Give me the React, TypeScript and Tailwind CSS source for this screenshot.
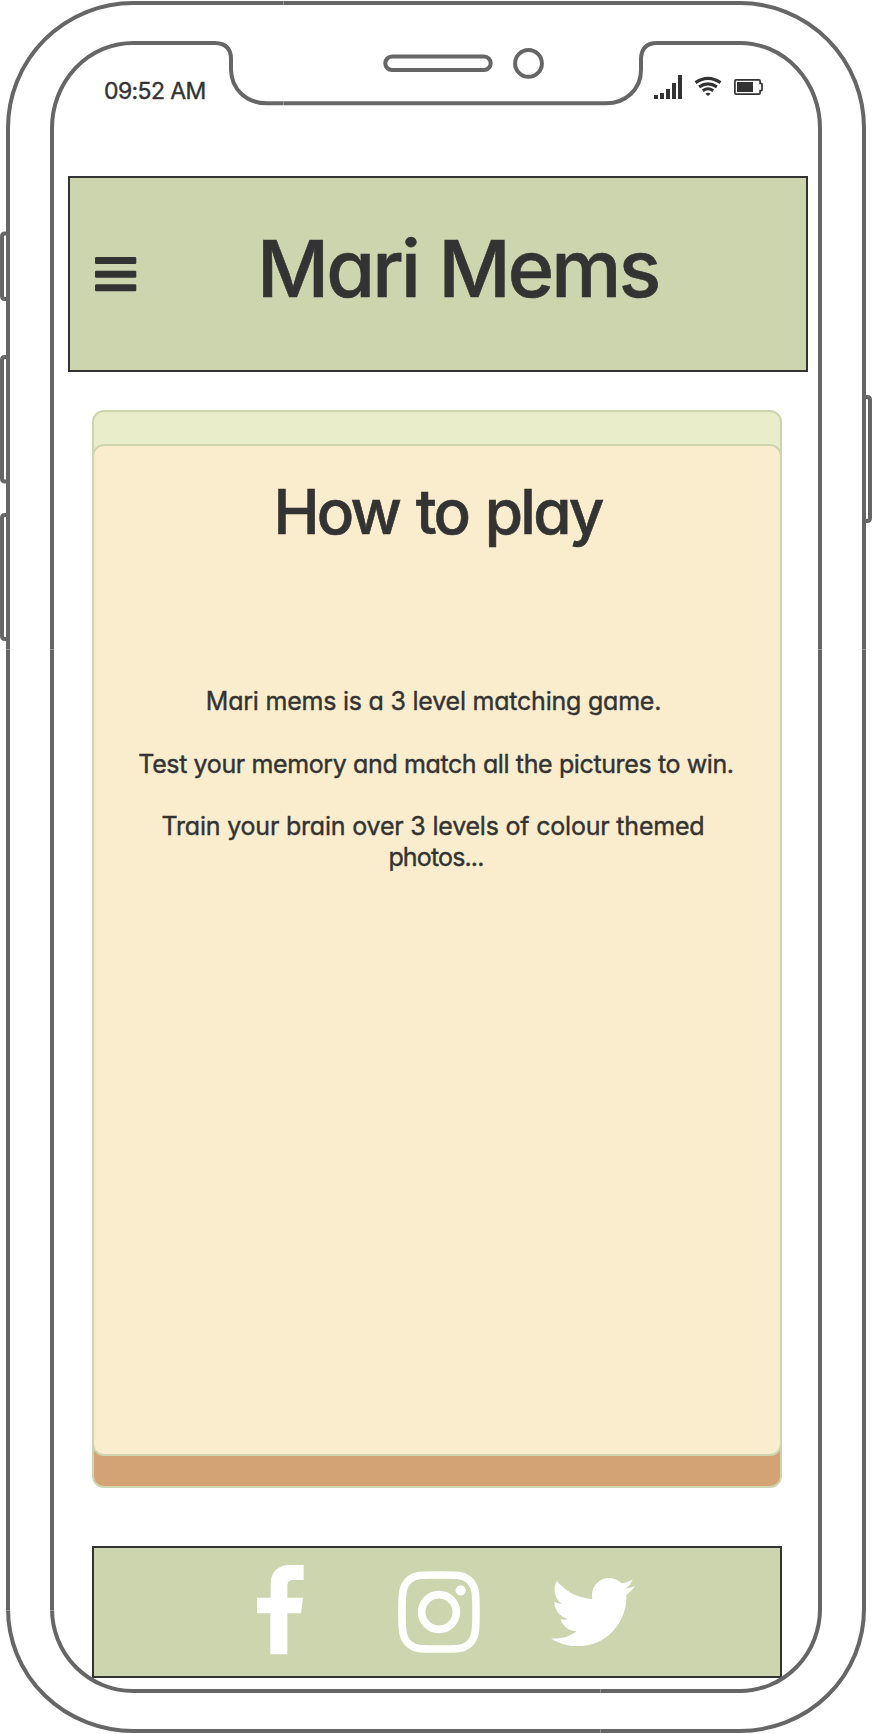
import React from "react";
import { FaTwitter } from "react-icons/fa";

function DeviceOutline() {
  return (
    <svg
      className="pointer-events-none absolute inset-0 z-10"
      width="872"
      height="1734"
      viewBox="0 0 872 1734"
      fill="none"
      stroke="#666"
      strokeWidth="4"
      aria-hidden="true"
    >
      <path d="M133 3H740A124 125 0 0 1 864 128V1609A124 122 0 0 1 740 1731H133A125 122 0 0 1 8 1609V128A125 125 0 0 1 133 3Z" />
      <path d="M133 43H215Q231 43.500 231 59V70C231.500 89 246 103.300 267 103.300H606C626 103.300 641 89 641 70V59Q641.500 43 657 43H740A80 85 0 0 1 820 128V1609A80 82 0 0 1 740 1691H133A81 82 0 0 1 52 1609V128A81 85 0 0 1 133 43Z" />
      <rect x="385.300" y="56.500" width="105.400" height="13.500" rx="6.700" />
      <circle cx="528.500" cy="63.400" r="13.400" />
      <path d="M8 233.500H5Q2 233.500 2 236.500V296Q2 299 5 299H8" />
      <path d="M8 357H5Q2 357 2 360V478.500Q2 481.500 5 481.500H8" />
      <path d="M8 515H5Q2 515 2 518V636Q2 639 5 639H8" />
      <path d="M864 397H867Q870 397 870 400V518Q870 521 867 521H864" />
      <path
        stroke="#fff"
        strokeOpacity=".3"
        strokeWidth="1"
        d="M283.500 1V5M283.500 101V106M6 649.500H10M50 649.500H54M818 649.500H822M862 649.500H866M6 1610.500H10M50 1610.500H54M600.500 1689V1693M600.500 1729V1733"
      />
    </svg>
  );
}

function StatusIcons() {
  return (
    <svg className="mt-[75px]" width="110" height="24" viewBox="0 0 110 24" fill="#333" aria-hidden="true">
      <path d="M0 20h4v4H0zM6 18h4v6H6zM12 14h4v10h-4zM18 8h4v16h-4zM24 0h4v24h-4z" />
      <g fill="none" stroke="#333" strokeWidth="3.200">
        <path d="M41.500 7.600Q54 -.800 66.500 7.600" />
        <path d="M45.100 11.800Q54 5.900 62.900 11.800" />
        <path d="M48.800 15.700Q54 12 59.200 15.700" strokeWidth="2.900" />
      </g>
      <path d="M51.300 18.700Q54 16.800 56.700 18.700L54 21Z" />
      <path
        d="M82 4.900h23q1.100 0 1.100 1.100v2.400h1q.9 0 .9.900v5.400q0 .900-.9.900h-1V18q0 1.100-1.100 1.100H82q-1.100 0-1.100-1.100V6q0-1.100 1.100-1.100Z"
        fill="none"
        stroke="#333"
        strokeWidth="1.700"
      />
      <path d="M83 7h16v10H83z" />
    </svg>
  );
}

function MenuIcon() {
  return (
    <svg width="42" height="35" viewBox="0 0 42 35" fill="#333" aria-hidden="true">
      <rect x="0" y="0" width="41.300" height="7" rx="1.300" />
      <rect x="0" y="13.700" width="41.300" height="7" rx="1.300" />
      <rect x="0" y="27.300" width="41.300" height="7" rx="1.300" />
    </svg>
  );
}

function FacebookIcon() {
  return (
    <svg width="47" height="90" viewBox="0 0 141 270" fill="#fff" aria-hidden="true">
      <path d="M0 98H41V56C41 22 63 0 97 0H140V45H109C97 45 91 51 91 63V98H138L132 145H91V268H40V145H0Z" />
    </svg>
  );
}

function InstagramIcon() {
  return (
    <svg width="82" height="82" viewBox="0 0 248 248" fill="none" stroke="#fff" strokeWidth="23" aria-hidden="true">
      <path d="M124 12C180 12 194 11 212 25C236 44 236 68 236 124C236 180 236 204 212 223C194 237 180 236 124 236C68 236 54 237 36 223C12 204 12 180 12 124C12 68 12 44 36 25C54 11 68 12 124 12Z" />
      <circle cx="124" cy="124" r="52.500" />
      <circle cx="189.500" cy="58.500" r="15.500" fill="#fff" stroke="none" />
    </svg>
  );
}

export default function App() {
  return (
    <div className="relative flex h-[1734px] w-[872px] flex-col overflow-hidden bg-white font-['Inter',sans-serif] text-[#333] [font-feature-settings:'cv11']">
      <DeviceOutline />

      <div className="flex h-[176px] items-start justify-between pr-[108px] pl-[104px]">
        <time className="mt-[80px] text-[23px] leading-none tracking-[-0.6px] whitespace-nowrap [-webkit-text-stroke:0.4px_#333]">
          09:52 AM
        </time>
        <StatusIcons />
      </div>

      <header className="ml-[68px] flex h-[196px] w-[740px] shrink-0 items-center border-2 border-[#333] bg-[#cdd5ae] pl-[25px]">
        <button type="button" aria-label="Menu">
          <MenuIcon />
        </button>
        <h1 className="ml-[120px] pb-[12px] text-[79px] leading-none font-medium tracking-[-2.8px] whitespace-nowrap [word-spacing:2px] [-webkit-text-stroke:0.6px_#333]">
          Mari Mems
        </h1>
      </header>

      <main className="mt-[38px] ml-[92px] h-[1078px] w-[690px] shrink-0 rounded-xl border-2 border-[#ccd5ae] bg-linear-to-b from-[#e9edc9] from-50% to-[#d4a373] to-50% pt-[32px]">
        <section className="-mx-[2px] flex h-[1012px] flex-col items-center rounded-xl border-2 border-[#ccd5ae] bg-[#faedcd] pt-[35px]">
          <h2 className="ml-px text-[62px] leading-none font-medium tracking-[-2.8px] whitespace-nowrap [word-spacing:3px] [-webkit-text-stroke:0.6px_#333]">
            How to play
          </h2>
          <div className="mt-[143px] flex flex-col gap-[31.5px] text-center text-[25px] leading-[31px] whitespace-nowrap [-webkit-text-stroke:0.4px_#333]">
            <p className="mr-[7px] tracking-[-0.22px]">Mari mems is a 3 level matching game.</p>
            <p className="mr-[2px] tracking-[-0.38px]">Test your memory and match all the pictures to win.</p>
            <p className="mr-[8px] tracking-[-0.2px]">
              Train your brain over 3 levels of colour themed
              <br />
              <span className="pl-[6px] tracking-[-0.85px]">photos...</span>
            </p>
          </div>
        </section>
      </main>

      <footer className="mt-[58px] ml-[92px] flex h-[132px] w-[690px] shrink-0 items-start border-2 border-[#333] bg-[#cdd5ae] pl-[163px] text-white">
        <a aria-label="Facebook" className="mt-[17px]">
          <FacebookIcon />
        </a>
        <a aria-label="Instagram" className="mt-[23px] ml-[94px]">
          <InstagramIcon />
        </a>
        <a aria-label="Twitter" className="mt-[22px] ml-[71px]">
          <FaTwitter size={84} />
        </a>
      </footer>
    </div>
  );
}
